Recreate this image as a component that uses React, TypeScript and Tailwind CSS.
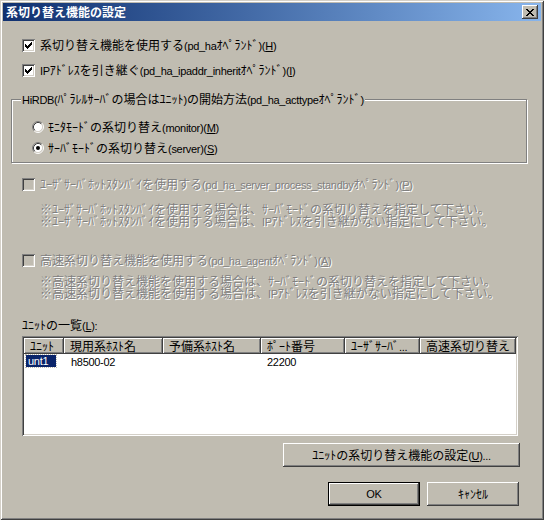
import { Fragment } from "react";

const raised =
  "shadow-[inset_-1px_-1px_0_#404040,inset_1px_1px_0_#ffffff,inset_-2px_-2px_0_#808080]";
const sunken =
  "shadow-[inset_1px_1px_0_#808080,inset_-1px_-1px_0_#ffffff,inset_2px_2px_0_#404040,inset_-2px_-2px_0_#d4d0c8]";
const dim = "text-[#808080] [text-shadow:1px_1px_0_#ffffff]";

// ASCII runs get a narrower latin face; "&X" marks the accelerator key
function T({ s }: { s: string }) {
  const runs = s.split(/([\x20-\x7e]+)/).filter(Boolean);
  return (
    <>
      {runs.map((run, i) => {
        if (!/^[\x20-\x7e]+$/.test(run)) return <Fragment key={i}>{run}</Fragment>;
        const bits = run.split(/&(.)/);
        return (
          <span key={i} className="font-['Liberation_Sans',sans-serif] text-[11px] tracking-[-0.3px]">
            {bits.map((b, j) => (j % 2 === 1 ? <span key={j} className="underline">{b}</span> : b))}
          </span>
        );
      })}
    </>
  );
}

// classic 7x7 check glyph, one row per string
const CHECK = ["......#", ".....##", "#...###", "##.###.", "#####..", ".###...", "..#...."];

function Check({ checked, disabled }: { checked?: boolean; disabled?: boolean }) {
  return (
    <div className={`relative h-[13px] w-[13px] flex-shrink-0 ${sunken} ${disabled ? "bg-[#c0bcb1]" : "bg-white"}`}>
      {checked && (
        <svg className="absolute left-[3px] top-[3px]" width="7" height="7" viewBox="0 0 7 7" shapeRendering="crispEdges">
          {CHECK.flatMap((row, y) =>
            row.split("").map((c, x) => (c === "#" ? <rect key={`${x}-${y}`} x={x} y={y} width="1" height="1" fill="#000" /> : null))
          )}
        </svg>
      )}
    </div>
  );
}

function Radio({ checked }: { checked?: boolean }) {
  return (
    <svg width="12" height="12" viewBox="0 0 12 12" className="flex-shrink-0">
      <circle cx="6" cy="6" r="4.5" fill="#fff" />
      <path d="M2.11 9.89 A5.5 5.5 0 0 1 9.89 2.11" stroke="#808080" fill="none" />
      <path d="M9.89 2.11 A5.5 5.5 0 0 1 2.11 9.89" stroke="#ffffff" fill="none" />
      <path d="M2.82 9.18 A4.5 4.5 0 0 1 9.18 2.82" stroke="#404040" fill="none" />
      <path d="M9.18 2.82 A4.5 4.5 0 0 1 2.82 9.18" stroke="#d4d0c8" fill="none" />
      {checked && <circle cx="6" cy="6" r="2" fill="#000" />}
    </svg>
  );
}

const COLS: { label: string; w: string }[] = [
  { label: "ﾕﾆｯﾄ", w: "w-[40px]" },
  { label: "現用系ﾎｽﾄ名", w: "w-[99px]" },
  { label: "予備系ﾎｽﾄ名", w: "w-[98px]" },
  { label: "ﾎﾟｰﾄ番号", w: "w-[84px]" },
  { label: "ﾕｰｻﾞｻｰﾊﾞ...", w: "w-[75px]" },
  { label: "高速系切り替え", w: "w-[96px]" },
];

export default function App() {
  return (
    <div className="h-[520px] w-[544px] bg-[#c0bcb1] p-[3px] font-['Noto_Sans_CJK_JP',sans-serif] text-[12px] leading-[12px] text-black shadow-[inset_1px_1px_0_#d4d0c8,inset_-1px_-1px_0_#404040,inset_2px_2px_0_#ffffff,inset_-2px_-2px_0_#808080]">
      {/* title bar */}
      <div className="flex h-[18px] items-center justify-between bg-gradient-to-r from-[#10306f] to-[#88b5ec] pl-[3px] pr-[3px]">
        <span className="font-bold text-white">系切り替え機能の設定</span>
        <div className={`flex h-[14px] w-[16px] items-center justify-center bg-[#c0bcb1] ${raised}`}>
          <svg width="8" height="7" viewBox="0 0 8 7" shapeRendering="crispEdges">
            <path d="M0 0h2v1h-2zM6 0h2v1h-2zM1 1h2v1h-2zM5 1h2v1h-2zM2 2h4v1h-4zM3 3h2v1h-2zM2 4h4v1h-4zM1 5h2v1h-2zM5 5h2v1h-2zM0 6h2v1h-2zM6 6h2v1h-2z" fill="#000" />
          </svg>
        </div>
      </div>

      <div className="flex flex-col pl-[8px]">
        <div className="ml-[11px] mt-[18px] flex h-[13px] items-center gap-[5px]">
          <Check checked />
          <span><T s="系切り替え機能を使用する(pd_haｵﾍﾟﾗﾝﾄﾞ)(&H)" /></span>
        </div>
        <div className="ml-[11px] mt-[12px] flex h-[13px] items-center gap-[5px]">
          <Check checked />
          <span><T s="IPｱﾄﾞﾚｽを引き継ぐ(pd_ha_ipaddr_inheritｵﾍﾟﾗﾝﾄﾞ)(&I)" /></span>
        </div>

        {/* group box */}
        <div className="relative mt-[22px] h-[64px] w-[516px] border border-[#808080] pl-[20px] pt-[21px] shadow-[inset_1px_1px_0_#ffffff,1px_1px_0_#ffffff]">
          <span className="absolute -top-[7px] left-[9px] bg-[#c0bcb1] px-[1px]">
            <T s="HiRDB(ﾊﾟﾗﾚﾙｻｰﾊﾞの場合はﾕﾆｯﾄ)の開始方法(pd_ha_acttypeｵﾍﾟﾗﾝﾄﾞ)" />
          </span>
          <div className="flex h-[12px] items-center gap-[4px]">
            <Radio />
            <span><T s="ﾓﾆﾀﾓｰﾄﾞの系切り替え(monitor)(&M)" /></span>
          </div>
          <div className="mt-[9px] flex h-[12px] items-center gap-[4px]">
            <Radio checked />
            <span><T s="ｻｰﾊﾞﾓｰﾄﾞの系切り替え(server)(&S)" /></span>
          </div>
        </div>

        <div className="ml-[11px] mt-[15px] flex h-[13px] items-center gap-[5px]">
          <Check disabled />
          <span className={dim}>
            <T s="ﾕｰｻﾞｻｰﾊﾞﾎｯﾄｽﾀﾝﾊﾞｲを使用する(pd_ha_server_process_standbyｵﾍﾟﾗﾝﾄﾞ)(&P)" />
          </span>
        </div>
        <div className={`ml-[29px] mt-[12px] ${dim}`}>
          <div><T s="※ﾕｰｻﾞｻｰﾊﾞﾎｯﾄｽﾀﾝﾊﾞｲを使用する場合は、ｻｰﾊﾞﾓｰﾄﾞの系切り替えを指定して下さい。" /></div>
          <div><T s="※ﾕｰｻﾞｻｰﾊﾞﾎｯﾄｽﾀﾝﾊﾞｲを使用する場合は、IPｱﾄﾞﾚｽを引き継がない指定にして下さい。" /></div>
        </div>

        <div className="ml-[11px] mt-[26px] flex h-[13px] items-center gap-[5px]">
          <Check disabled />
          <span className={dim}>
            <T s="高速系切り替え機能を使用する(pd_ha_agentｵﾍﾟﾗﾝﾄﾞ)(&A)" />
          </span>
        </div>
        <div className={`ml-[29px] mt-[8px] ${dim}`}>
          <div><T s="※高速系切り替え機能を使用する場合は、ｻｰﾊﾞﾓｰﾄﾞの系切り替えを指定して下さい。" /></div>
          <div><T s="※高速系切り替え機能を使用する場合は、IPｱﾄﾞﾚｽを引き継がない指定にして下さい。" /></div>
        </div>

        <div className="ml-[11px] mt-[19px]">
          <T s="ﾕﾆｯﾄの一覧(&L):" />
        </div>

        {/* list view */}
        <div className={`ml-[11px] mt-[4px] h-[100px] w-[496px] bg-white p-[2px] ${sunken}`}>
          <div className="flex h-[16px]">
            {COLS.map(c => (
              <div key={c.label} className={`flex items-center whitespace-nowrap bg-[#c0bcb1] pl-[6px] ${c.w} ${raised}`}>
                <span><T s={c.label} /></span>
              </div>
            ))}
          </div>
          <div className="mt-[1px] flex h-[12px] items-center">
            <div className="w-[40px] pl-[2px]">
              <span className="flex h-[12px] w-[30px] items-center bg-[#0a246a] pl-[2px] text-white outline-1 outline-dotted outline-[#c0bcb1]">
                <T s="unt1" />
              </span>
            </div>
            <div className="w-[99px] pl-[7px]"><T s="h8500-02" /></div>
            <div className="w-[98px]" />
            <div className="w-[84px] pl-[6px]"><T s="22200" /></div>
          </div>
        </div>

        <div className={`ml-[272px] mt-[7px] flex h-[24px] w-[237px] items-center justify-center bg-[#c0bcb1] ${raised}`}>
          <span><T s="ﾕﾆｯﾄの系切り替え機能の設定(&U)..." /></span>
        </div>

        <div className="mt-[15px] flex gap-[7px] pl-[317px]">
          <div className="h-[24px] w-[92px] border border-black">
            <div className={`flex h-full items-center justify-center ${raised}`}><T s="OK" /></div>
          </div>
          <div className={`flex h-[24px] w-[92px] items-center justify-center ${raised}`}>ｷｬﾝｾﾙ</div>
        </div>
      </div>
    </div>
  );
}
